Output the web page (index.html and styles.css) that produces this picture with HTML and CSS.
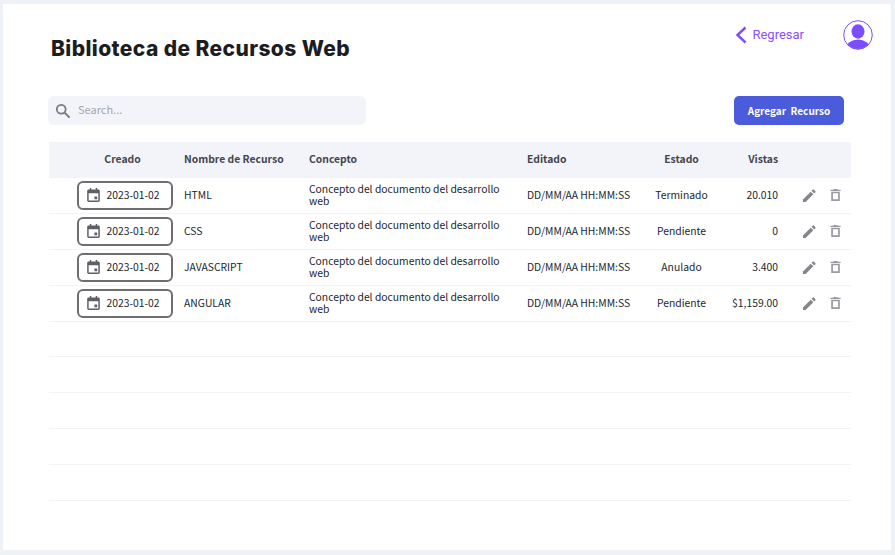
FILE: index.html
```html
<!DOCTYPE html>
<html lang="es">
<head>
  <meta charset="UTF-8" />
  <meta name="viewport" content="width=device-width, initial-scale=1.0"/>
  <title>Biblioteca de Recursos Web</title>
  <link rel="stylesheet" href="styles.css">
</head>
<body>
  <svg class="defs" width="0" height="0">
    <symbol id="i-cal" viewBox="0 0 14 15"><path d="M3 0h1.600v1.600h4.800V0H11v1.600h1.200c.9 0 1.600.7 1.600 1.500v10.300c0 .9-.7 1.600-1.600 1.600H1.800C.9 15 .2 14.300.2 13.400V3.100c0-.8.7-1.500 1.600-1.500H3zM1.800 5.500v7.900h10.400V5.500zM8 9h3v3H8z" fill-rule="evenodd"/></symbol>
    <symbol id="i-edit" viewBox="0 0 16 16"><path d="M1 12.200V15h2.800l8.300-8.300-2.800-2.800zM14.300 4.500c.3-.3.3-.8 0-1.100l-1.700-1.700c-.3-.3-.8-.3-1.100 0l-1.300 1.300 2.800 2.800z"/></symbol>
    <symbol id="i-trash" viewBox="0 0 12 14"><path d="M4 0h4l.7.8H12v1.500H0V.8h3.300zM1 3.300h10V14H1zM3 5v7h6V5z" fill-rule="evenodd"/></symbol>
  </svg>

  <main class="panel">
    <header class="top">
      <h1>Biblioteca de Recursos Web</h1>
      <a class="back" href="#">
        <svg width="12" height="18" viewBox="0 0 12 18"><path d="M10.500 1.500 2.500 9l8 7.500" fill="none" stroke="#7c4dff" stroke-width="2.400"/></svg>
        Regresar
      </a>
      <svg class="avatar" width="30" height="30" viewBox="0 0 30 30">
        <defs><clipPath id="round"><circle cx="15" cy="15" r="14"/></clipPath></defs>
        <circle cx="15" cy="15" r="14.300" fill="#fff" stroke="#7c4dff" stroke-width="1"/>
        <g clip-path="url(#round)" fill="#7c4dff">
          <ellipse cx="15" cy="11.500" rx="6.500" ry="7.200"/>
          <ellipse cx="15" cy="29" rx="12" ry="9.500"/>
        </g>
      </svg>
    </header>

    <div class="tools">
      <label class="search">
        <svg width="16" height="16" viewBox="0 0 18 18"><circle cx="7" cy="7" r="5" fill="none" stroke="#77777c" stroke-width="2"/><path d="m10.800 10.800 5.600 5.600" stroke="#77777c" stroke-width="2.200"/></svg>
        <input type="text" placeholder="Search...">
      </label>
      <button type="button">Agregar&nbsp; Recurso</button>
    </div>

    <table>
      <colgroup>
        <col class="c-created"><col class="c-name"><col class="c-concept"><col class="c-edited"><col class="c-state"><col class="c-views"><col class="c-actions">
      </colgroup>
      <thead>
        <tr>
          <th class="center created-head">Creado</th>
          <th>Nombre de Recurso</th>
          <th>Concepto</th>
          <th>Editado</th>
          <th class="center">Estado</th>
          <th class="right">Vistas</th>
          <th></th>
        </tr>
      </thead>
      <tbody>
        <tr>
          <td><span class="date"><svg class="cal"><use href="#i-cal"/></svg>2023-01-02</span></td>
          <td>HTML</td>
          <td>Concepto del documento del desarrollo web</td>
          <td>DD/MM/AA HH:MM:SS</td>
          <td class="center">Terminado</td>
          <td class="right">20.010</td>
          <td class="actions"><svg class="edit"><use href="#i-edit"/></svg><svg class="trash"><use href="#i-trash"/></svg></td>
        </tr>
        <tr>
          <td><span class="date"><svg class="cal"><use href="#i-cal"/></svg>2023-01-02</span></td>
          <td>CSS</td>
          <td>Concepto del documento del desarrollo web</td>
          <td>DD/MM/AA HH:MM:SS</td>
          <td class="center">Pendiente</td>
          <td class="right">0</td>
          <td class="actions"><svg class="edit"><use href="#i-edit"/></svg><svg class="trash"><use href="#i-trash"/></svg></td>
        </tr>
        <tr>
          <td><span class="date"><svg class="cal"><use href="#i-cal"/></svg>2023-01-02</span></td>
          <td>JAVASCRIPT</td>
          <td>Concepto del documento del desarrollo web</td>
          <td>DD/MM/AA HH:MM:SS</td>
          <td class="center">Anulado</td>
          <td class="right">3.400</td>
          <td class="actions"><svg class="edit"><use href="#i-edit"/></svg><svg class="trash"><use href="#i-trash"/></svg></td>
        </tr>
        <tr>
          <td><span class="date"><svg class="cal"><use href="#i-cal"/></svg>2023-01-02</span></td>
          <td>ANGULAR</td>
          <td>Concepto del documento del desarrollo web</td>
          <td>DD/MM/AA HH:MM:SS</td>
          <td class="center">Pendiente</td>
          <td class="right">$1,159.00</td>
          <td class="actions"><svg class="edit"><use href="#i-edit"/></svg><svg class="trash"><use href="#i-trash"/></svg></td>
        </tr>
        <tr><td colspan="7"></td></tr>
        <tr><td colspan="7"></td></tr>
        <tr><td colspan="7"></td></tr>
        <tr><td colspan="7"></td></tr>
        <tr><td colspan="7"></td></tr>
      </tbody>
    </table>
  </main>
</body>
</html>
```
FILE: styles.css
```css
html, body {
  height: 100%;
}

body {
  margin: 0;
  padding: 4px 4px 5px 3px;
  box-sizing: border-box;
  background-color: #eef1f6;
  font-family: "Noto Sans CJK SC", "Noto Sans", sans-serif;
  color: #1c1f2e;
  overflow: hidden;
}

.defs {
  display: none;
}

.panel {
  height: 100%;
  background: white;
  padding: 16px 40px 0 46px;
  box-sizing: border-box;
}

.top {
  display: flex;
  align-items: flex-start;
  height: 76px;
}

h1 {
  margin: 16px auto 0 2px;
  font-family: Inter, "Liberation Sans", sans-serif;
  font-size: 21px;
  line-height: 26px;
  font-weight: 800;
  letter-spacing: 0.4px;
  color: #1d1d1f;
}

.back {
  display: flex;
  align-items: center;
  gap: 5px;
  margin-top: 6px;
  font-family: Roboto, sans-serif;
  font-size: 13px;
  line-height: 18px;
  color: #8a4fff;
  text-decoration: none;
}

.avatar {
  margin-left: 39px;
  margin-right: -22px;
}

.tools {
  display: flex;
  justify-content: space-between;
  align-items: center;
  height: 29px;
  margin-right: 7px;
}

.search {
  display: flex;
  align-items: center;
  gap: 7px;
  width: 318px;
  height: 29px;
  margin-left: -1px;
  padding-left: 7px;
  box-sizing: border-box;
  background-color: #f3f4f9;
  border-radius: 6px;
}

.search input {
  flex: 1;
  min-width: 0;
  padding: 0 0 4px;
  border: none;
  outline: none;
  background: none;
  font: inherit;
  font-size: 11px;
}

.search input::placeholder {
  color: #a5a6ab;
}

button {
  width: 110px;
  height: 29px;
  padding: 0;
  background-color: #4a5bdc;
  color: white;
  border: none;
  border-radius: 5px;
  font: inherit;
  font-size: 10px;
  font-weight: 700;
}

table {
  width: 802px;
  margin-top: 17px;
  border-collapse: separate;
  border-spacing: 0;
  table-layout: fixed;
  font-size: 10.35px;
}

.c-created { width: 126px; }
.c-name { width: 125px; }
.c-concept { width: 218px; }
.c-edited { width: 125px; }
.c-state { width: 77px; }
.c-views { width: 66px; }
.c-actions { width: 65px; }

th {
  height: 36px;
  padding: 0 8px 4px 9px;
  box-sizing: border-box;
  background-color: #f3f4f9;
  color: #44454f;
  font-weight: 700;
  text-align: left;
}

td {
  height: 35.9px;
  padding: 0 8px 0 9px;
  box-sizing: border-box;
  border-bottom: 1px solid #f3f3f5;
  line-height: 12px;
}

th.center, td.center {
  padding-left: 8px;
  text-align: center;
}

th.right, td.right {
  padding-left: 0;
  text-align: right;
}

th.created-head {
  padding-left: 29px;
}

.date {
  display: flex;
  align-items: center;
  justify-content: center;
  gap: 6px;
  width: 96px;
  height: 29px;
  margin-left: 19px;
  padding-right: 3px;
  box-sizing: border-box;
  border: 2px solid #6e6e72;
  border-radius: 6px;
}

.cal {
  width: 13px;
  height: 14px;
  fill: #5f6066;
}

td.actions {
  padding: 0 0 0 16px;
  white-space: nowrap;
}

.actions svg {
  vertical-align: middle;
}

.edit {
  width: 15px;
  height: 15px;
  margin-right: 13px;
  fill: #85858c;
}

.trash {
  width: 11px;
  height: 12px;
  fill: #9a9aa0;
}
```
